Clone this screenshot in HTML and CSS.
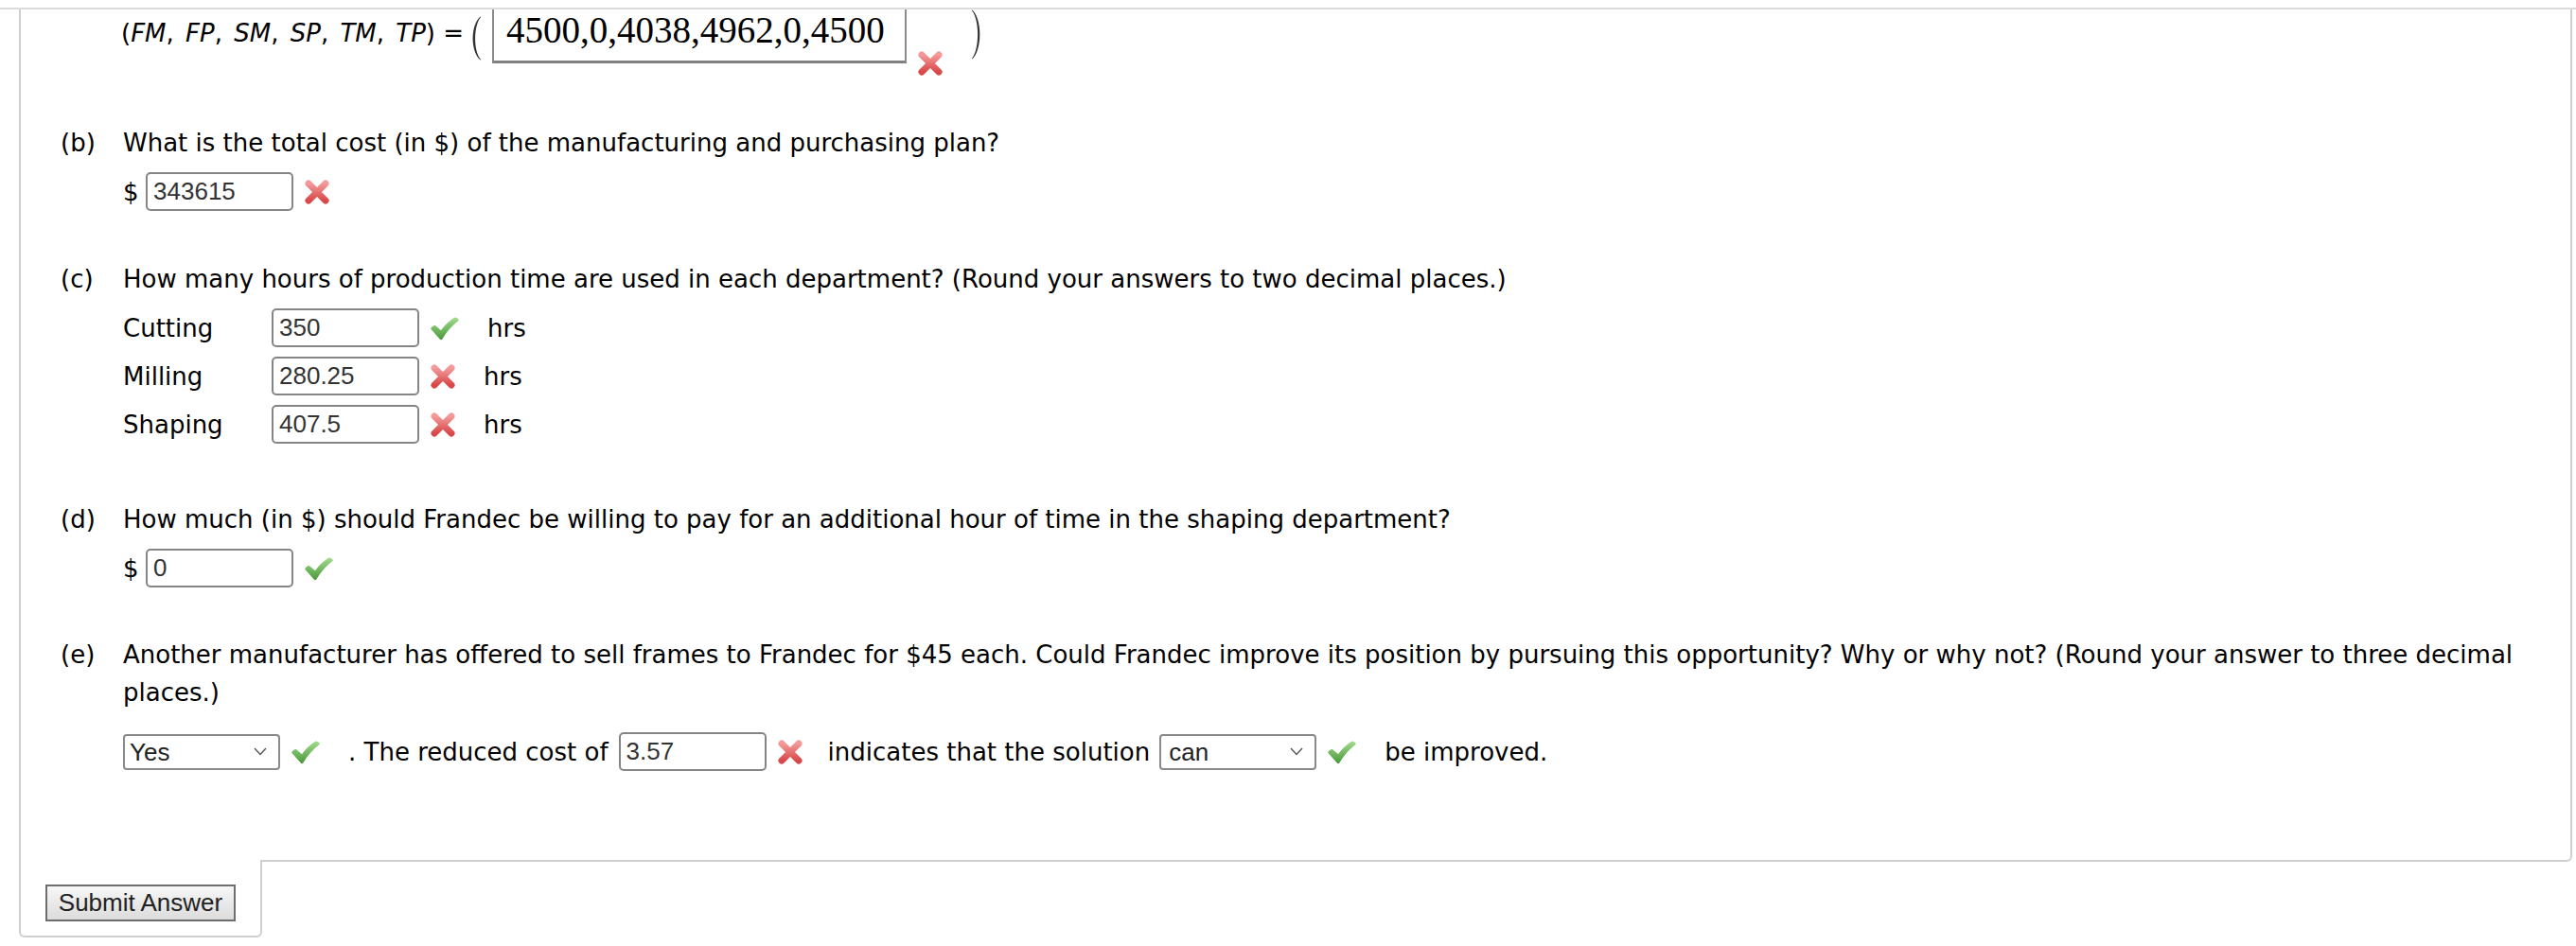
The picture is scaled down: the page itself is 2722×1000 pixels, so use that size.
FILE: index.html
```html
<!DOCTYPE html>
<html lang="en">
<head>
<meta charset="utf-8">
<title>Frandec problem</title>
<link rel="stylesheet" href="styles.css">
</head>
<body>
<svg class="defs" width="0" height="0" aria-hidden="true">
  <defs>
    <linearGradient id="gx" x1="0" y1="0" x2="0" y2="1">
      <stop offset="0" stop-color="#f49a9a"/>
      <stop offset="1" stop-color="#d84848"/>
    </linearGradient>
    <linearGradient id="gc" x1="0" y1="0" x2="0" y2="1">
      <stop offset="0" stop-color="#a2dc8e"/>
      <stop offset="1" stop-color="#4a983a"/>
    </linearGradient>
  </defs>
</svg>

<div class="topline"></div>

<div class="panel">
  <div class="formula">
    <span class="flabel"><span class="vars">(<i>FM</i>, <i>FP</i>, <i>SM</i>, <i>SP</i>, <i>TM</i>, <i>TP</i>)</span> =</span>
    <svg class="paren-l" width="14" height="47" viewBox="0 0 14 47"><path d="M12.5 0.5 C2 10 2 37 12.5 46.5 L13 45.8 C5.2 37 5.2 10 13 1.2 Z" fill="#333"/></svg>
    <div class="mathbox">4500,0,4038,4962,0,4500</div>
    <svg class="ic-x fx" width="28" height="28" viewBox="0 0 28 28"><path d="M5 5 L23 23 M23 5 L5 23" stroke="url(#gx)" stroke-width="7" stroke-linecap="round"/></svg>
    <svg class="paren-r" width="12" height="53" viewBox="0 0 12 53"><path d="M0.5 0.5 C11 11 11 42 0.5 52.5 L0 51.8 C8.2 42 8.2 11 0 1.2 Z" fill="#333"/></svg>
  </div>

  <div class="part part-b">
    <div class="q"><span class="lbl">(b)</span><span class="qt">What is the total cost (in $) of the manufacturing and purchasing plan?</span></div>
    <div class="ans">
      <span class="dollar">$</span>
      <input class="inp" type="text" value="343615">
      <svg class="ic-x" width="28" height="28" viewBox="0 0 28 28"><path d="M5 5 L23 23 M23 5 L5 23" stroke="url(#gx)" stroke-width="7" stroke-linecap="round"/></svg>
    </div>
  </div>

  <div class="part part-c">
    <div class="q"><span class="lbl">(c)</span><span class="qt">How many hours of production time are used in each department? (Round your answers to two decimal places.)</span></div>
    <div class="trow first">
      <span class="tlabel">Cutting</span>
      <input class="inp" type="text" value="350">
      <svg class="ic-c" width="32" height="26" viewBox="0 0 32 26"><path d="M1 13.5 Q2 11 5.5 9.8 L12 15.2 Q18 7 26.5 1.6 Q29.5 1.5 31 4.5 Q20 13 13.5 24.3 Q12 25.8 10.8 24.6 Z" fill="url(#gc)"/></svg>
      <span class="unit">hrs</span>
    </div>
    <div class="trow">
      <span class="tlabel">Milling</span>
      <input class="inp" type="text" value="280.25">
      <svg class="ic-x" width="28" height="28" viewBox="0 0 28 28"><path d="M5 5 L23 23 M23 5 L5 23" stroke="url(#gx)" stroke-width="7" stroke-linecap="round"/></svg>
      <span class="unit">hrs</span>
    </div>
    <div class="trow">
      <span class="tlabel">Shaping</span>
      <input class="inp" type="text" value="407.5">
      <svg class="ic-x" width="28" height="28" viewBox="0 0 28 28"><path d="M5 5 L23 23 M23 5 L5 23" stroke="url(#gx)" stroke-width="7" stroke-linecap="round"/></svg>
      <span class="unit">hrs</span>
    </div>
  </div>

  <div class="part part-d">
    <div class="q"><span class="lbl">(d)</span><span class="qt">How much (in $) should Frandec be willing to pay for an additional hour of time in the shaping department?</span></div>
    <div class="ans">
      <span class="dollar">$</span>
      <input class="inp" type="text" value="0">
      <svg class="ic-c" width="32" height="26" viewBox="0 0 32 26"><path d="M1 13.5 Q2 11 5.5 9.8 L12 15.2 Q18 7 26.5 1.6 Q29.5 1.5 31 4.5 Q20 13 13.5 24.3 Q12 25.8 10.8 24.6 Z" fill="url(#gc)"/></svg>
    </div>
  </div>

  <div class="part part-e">
    <div class="q"><span class="lbl">(e)</span><span class="qt">Another manufacturer has offered to sell frames to Frandec for $45 each. Could Frandec improve its position by pursuing this opportunity? Why or why not? (Round your answer to three decimal places.)</span></div>
    <div class="erow">
      <span class="sel"><span class="sel-text">Yes</span><svg class="chev" width="14" height="9" viewBox="0 0 14 9"><path d="M1 1 L7 7.5 L13 1" stroke="#555" stroke-width="1.4" fill="none"/></svg></span>
      <svg class="ic-c" width="32" height="26" viewBox="0 0 32 26"><path d="M1 13.5 Q2 11 5.5 9.8 L12 15.2 Q18 7 26.5 1.6 Q29.5 1.5 31 4.5 Q20 13 13.5 24.3 Q12 25.8 10.8 24.6 Z" fill="url(#gc)"/></svg>
      <span class="after-c">. The reduced cost of</span>
      <input class="inp gap-inp" type="text" value="3.57">
      <svg class="ic-x" width="28" height="28" viewBox="0 0 28 28"><path d="M5 5 L23 23 M23 5 L5 23" stroke="url(#gx)" stroke-width="7" stroke-linecap="round"/></svg>
      <span class="after-x">indicates that the solution</span>
      <span class="sel sel-can"><span class="sel-text">can</span><svg class="chev" width="14" height="9" viewBox="0 0 14 9"><path d="M1 1 L7 7.5 L13 1" stroke="#555" stroke-width="1.4" fill="none"/></svg></span>
      <svg class="ic-c" width="32" height="26" viewBox="0 0 32 26"><path d="M1 13.5 Q2 11 5.5 9.8 L12 15.2 Q18 7 26.5 1.6 Q29.5 1.5 31 4.5 Q20 13 13.5 24.3 Q12 25.8 10.8 24.6 Z" fill="url(#gc)"/></svg>
      <span class="after-c">be improved.</span>
    </div>
  </div>
</div>

<div class="tab">
  <button class="submit" type="button">Submit Answer</button>
</div>
</body>
</html>
```

FILE: styles.css
```css
html, body {
  margin: 0;
  padding: 0;
  background: #fff;
}

body {
  font-family: "DejaVu Sans", Verdana, sans-serif;
  font-size: 26px;
  color: #000;
}

.defs {
  position: absolute;
  width: 0;
  height: 0;
  overflow: hidden;
}

.topline {
  margin-top: 8px;
  border-top: 2px solid #dcdcdc;
  height: 0;
}

.panel {
  margin-left: 20px;
  margin-right: 4px;
  border-left: 2px solid #cfcfcf;
  border-right: 2px solid #cfcfcf;
  border-bottom: 2px solid #cfcfcf;
  border-bottom-right-radius: 6px;
  padding: 0 20px 93px 42px;
}

/* top formula row */
.formula {
  display: flex;
  align-items: flex-start;
  margin-left: 64px;
  height: 70px;
}

.flabel {
  width: 352px;
  flex-shrink: 0;
  white-space: nowrap;
  line-height: 40px;
  margin-top: 5px;
}

.vars {
  word-spacing: 4px;
}

.paren-l {
  margin-left: 15px;
  margin-top: 7px;
  flex-shrink: 0;
}

.mathbox {
  box-sizing: border-box;
  width: 438px;
  height: 57px;
  margin-left: 11px;
  border-left: 2px solid #8c8c8c;
  border-right: 2px solid #8c8c8c;
  border-bottom: 3px solid #808080;
  padding-left: 13px;
  font-family: "Liberation Serif", "Times New Roman", serif;
  font-size: 39px;
  line-height: 44px;
  white-space: nowrap;
}

.fx {
  margin-left: 19px;
  margin-top: 43px;
}

.paren-r {
  margin-left: 30px;
  flex-shrink: 0;
}

/* parts */
.part-b { margin-top: 51px; }
.part-c { margin-top: 52px; }
.part-d { margin-top: 60px; }
.part-e { margin-top: 51px; }

.q {
  display: flex;
  line-height: 40px;
}

.lbl {
  width: 66px;
  flex-shrink: 0;
}

.qt {
  flex: 1;
}

.ans {
  display: flex;
  align-items: center;
  height: 41px;
  margin-top: 11px;
  margin-left: 66px;
  line-height: 40px;
}

.dollar {
  margin-right: 7.5px;
}

.inp {
  box-sizing: border-box;
  width: 156px;
  height: 41px;
  margin: 0;
  border: 2px solid #858585;
  border-radius: 5px;
  padding: 0 6px;
  font-family: "Liberation Sans", Arial, sans-serif;
  font-size: 26px;
  color: #333;
  background: #fff;
  outline: none;
}

.ic-x,
.ic-c {
  margin-left: 11px;
  flex-shrink: 0;
}

/* (c) table */
.trow {
  display: flex;
  align-items: center;
  height: 41px;
  margin-left: 66px;
  margin-top: 10px;
  line-height: 40px;
}

.trow.first {
  margin-top: 11px;
}

.tlabel {
  width: 157px;
  flex-shrink: 0;
}

.unit {
  margin-left: 29px;
}

/* (e) answer row */
.erow {
  display: flex;
  align-items: center;
  height: 43px;
  margin-top: 21px;
  margin-left: 66px;
  line-height: 40px;
  white-space: nowrap;
}

.after-c {
  margin-left: 29px;
}

.after-x {
  margin-left: 26px;
}

.gap-inp {
  margin-left: 11px;
}

.sel {
  box-sizing: border-box;
  display: flex;
  align-items: center;
  justify-content: space-between;
  width: 166px;
  height: 38px;
  border: 2px solid #8a8a8a;
  border-radius: 4px;
  padding: 0 12px 0 5px;
  background: #fff;
  font-family: "Liberation Sans", Arial, sans-serif;
  font-size: 26px;
  color: #222;
  line-height: 34px;
}

.sel-can {
  margin-left: 10px;
  padding-left: 8px;
}

.chev {
  flex-shrink: 0;
}

/* submit tab */
.tab {
  position: relative;
  box-sizing: border-box;
  width: 257px;
  margin-left: 20px;
  margin-top: -2px;
  background: #fff;
  border-left: 2px solid #cfcfcf;
  border-right: 2px solid #cfcfcf;
  border-bottom: 2px solid #cfcfcf;
  border-radius: 0 0 6px 6px;
  padding: 26px 0 15px 26px;
}

.submit {
  display: block;
  box-sizing: border-box;
  width: 201px;
  height: 39px;
  margin: 0;
  padding: 0;
  border: 2px solid #6e6e6e;
  border-radius: 0;
  background: linear-gradient(#f7f7f7, #dcdcdc);
  font-family: "Liberation Sans", Arial, sans-serif;
  font-size: 26px;
  color: #222;
  line-height: 35px;
}
```
